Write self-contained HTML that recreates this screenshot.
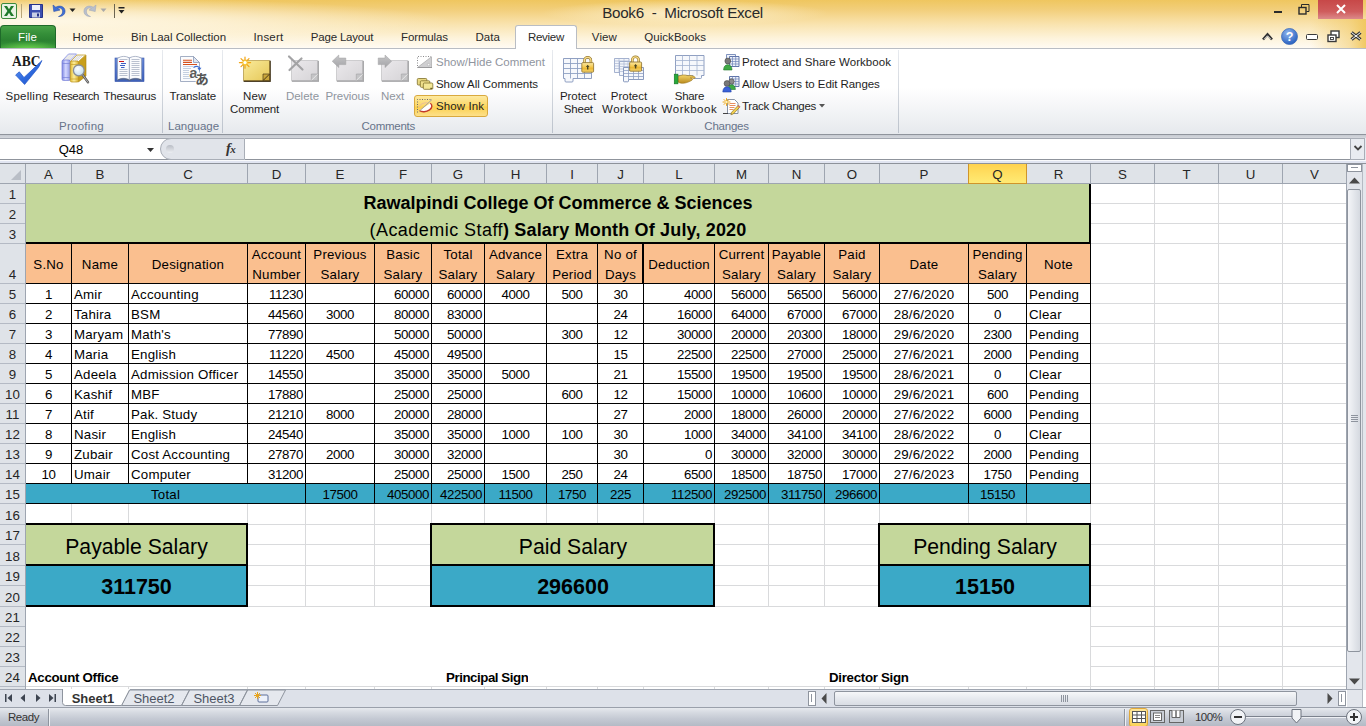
<!DOCTYPE html>
<html><head><meta charset="utf-8"><title>Book6 - Microsoft Excel</title>
<style>
html,body{margin:0;padding:0}
body{width:1366px;height:726px;overflow:hidden;position:relative;background:#fff;font-family:"Liberation Sans","Noto Sans CJK JP",sans-serif;font-size:12px;color:#1e1e1e}
div{position:absolute;box-sizing:border-box;white-space:nowrap}
svg{position:absolute;overflow:visible}
.t{font-size:13.3px;color:#000;overflow:hidden}
.nu{letter-spacing:-.4px}
.tx{letter-spacing:.2px}
.dt{letter-spacing:.15px}
.b{font-weight:bold}
.n{font-weight:normal}
.big{font-size:18px}
.big .n{letter-spacing:.45px}
.s1{font-size:21.2px}
.sg{letter-spacing:-.3px}
.s2{font-size:21.5px}
.h{font-size:13.3px;color:#262626}
.rl,.gl,.tb{font-size:11.5px;height:15px;line-height:15px;color:#1e1e1e}

.dis{color:#8f959e}
.gl{color:#67738a}
.tb{color:#2a2a2a}
.w{color:#fff}
.st{color:#333}
.ttl{font-size:15.2px;height:22px;line-height:22px;color:#2a2a2a}
</style></head><body>
<div style="left:71px;top:184px;width:1px;height:506px;background:#d9dadc"></div>
<div style="left:128px;top:184px;width:1px;height:506px;background:#d9dadc"></div>
<div style="left:247px;top:184px;width:1px;height:506px;background:#d9dadc"></div>
<div style="left:305px;top:184px;width:1px;height:506px;background:#d9dadc"></div>
<div style="left:374px;top:184px;width:1px;height:506px;background:#d9dadc"></div>
<div style="left:431px;top:184px;width:1px;height:506px;background:#d9dadc"></div>
<div style="left:484px;top:184px;width:1px;height:506px;background:#d9dadc"></div>
<div style="left:546px;top:184px;width:1px;height:506px;background:#d9dadc"></div>
<div style="left:597px;top:184px;width:1px;height:506px;background:#d9dadc"></div>
<div style="left:643px;top:184px;width:1px;height:506px;background:#d9dadc"></div>
<div style="left:714px;top:184px;width:1px;height:506px;background:#d9dadc"></div>
<div style="left:768px;top:184px;width:1px;height:506px;background:#d9dadc"></div>
<div style="left:824px;top:184px;width:1px;height:506px;background:#d9dadc"></div>
<div style="left:879px;top:184px;width:1px;height:506px;background:#d9dadc"></div>
<div style="left:968px;top:184px;width:1px;height:506px;background:#d9dadc"></div>
<div style="left:1026px;top:184px;width:1px;height:506px;background:#d9dadc"></div>
<div style="left:1090px;top:184px;width:1px;height:506px;background:#d9dadc"></div>
<div style="left:1154px;top:184px;width:1px;height:506px;background:#d9dadc"></div>
<div style="left:1218px;top:184px;width:1px;height:506px;background:#d9dadc"></div>
<div style="left:1282px;top:184px;width:1px;height:506px;background:#d9dadc"></div>
<div style="left:1346px;top:184px;width:1px;height:506px;background:#d9dadc"></div>
<div style="left:26px;top:203px;width:1321px;height:1px;background:#d9dadc"></div>
<div style="left:26px;top:223px;width:1321px;height:1px;background:#d9dadc"></div>
<div style="left:26px;top:243px;width:1321px;height:1px;background:#d9dadc"></div>
<div style="left:26px;top:283px;width:1321px;height:1px;background:#d9dadc"></div>
<div style="left:26px;top:303px;width:1321px;height:1px;background:#d9dadc"></div>
<div style="left:26px;top:323px;width:1321px;height:1px;background:#d9dadc"></div>
<div style="left:26px;top:343px;width:1321px;height:1px;background:#d9dadc"></div>
<div style="left:26px;top:363px;width:1321px;height:1px;background:#d9dadc"></div>
<div style="left:26px;top:383px;width:1321px;height:1px;background:#d9dadc"></div>
<div style="left:26px;top:403px;width:1321px;height:1px;background:#d9dadc"></div>
<div style="left:26px;top:423px;width:1321px;height:1px;background:#d9dadc"></div>
<div style="left:26px;top:443px;width:1321px;height:1px;background:#d9dadc"></div>
<div style="left:26px;top:463px;width:1321px;height:1px;background:#d9dadc"></div>
<div style="left:26px;top:483px;width:1321px;height:1px;background:#d9dadc"></div>
<div style="left:26px;top:503px;width:1321px;height:1px;background:#d9dadc"></div>
<div style="left:26px;top:524px;width:1321px;height:1px;background:#d9dadc"></div>
<div style="left:26px;top:544px;width:1321px;height:1px;background:#d9dadc"></div>
<div style="left:26px;top:565px;width:1321px;height:1px;background:#d9dadc"></div>
<div style="left:26px;top:585px;width:1321px;height:1px;background:#d9dadc"></div>
<div style="left:26px;top:606px;width:1321px;height:1px;background:#d9dadc"></div>
<div style="left:26px;top:626px;width:1321px;height:1px;background:#d9dadc"></div>
<div style="left:26px;top:646px;width:1321px;height:1px;background:#d9dadc"></div>
<div style="left:26px;top:666px;width:1321px;height:1px;background:#d9dadc"></div>
<div style="left:26px;top:686px;width:1321px;height:1px;background:#d9dadc"></div>
<div style="left:26px;top:607px;width:1064px;height:79px;background:#fff"></div>
<div style="left:26px;top:184px;width:1065px;height:60px;background:#c4d79b"></div>
<div style="left:26px;top:244px;width:1065px;height:40px;background:#fabf8f"></div>
<div style="left:26px;top:284px;width:1065px;height:200px;background:#fff"></div>
<div style="left:26px;top:484px;width:1065px;height:20px;background:#3ba9c7"></div>
<div style="left:26px;top:525px;width:222px;height:41px;background:#c4d79b"></div>
<div style="left:26px;top:566px;width:222px;height:41px;background:#3ba9c7"></div>
<div style="left:432px;top:525px;width:283px;height:41px;background:#c4d79b"></div>
<div style="left:432px;top:566px;width:283px;height:41px;background:#3ba9c7"></div>
<div style="left:880px;top:525px;width:211px;height:41px;background:#c4d79b"></div>
<div style="left:880px;top:566px;width:211px;height:41px;background:#3ba9c7"></div>
<div style="left:25px;top:283px;width:1066px;height:1px;background:#000"></div>
<div style="left:25px;top:303px;width:1066px;height:1px;background:#000"></div>
<div style="left:25px;top:323px;width:1066px;height:1px;background:#000"></div>
<div style="left:25px;top:343px;width:1066px;height:1px;background:#000"></div>
<div style="left:25px;top:363px;width:1066px;height:1px;background:#000"></div>
<div style="left:25px;top:383px;width:1066px;height:1px;background:#000"></div>
<div style="left:25px;top:403px;width:1066px;height:1px;background:#000"></div>
<div style="left:25px;top:423px;width:1066px;height:1px;background:#000"></div>
<div style="left:25px;top:443px;width:1066px;height:1px;background:#000"></div>
<div style="left:25px;top:463px;width:1066px;height:1px;background:#000"></div>
<div style="left:25px;top:483px;width:1066px;height:1px;background:#000"></div>
<div style="left:25px;top:503px;width:1066px;height:1px;background:#000"></div>
<div style="left:25px;top:242px;width:1066px;height:2px;background:#000"></div>
<div style="left:1089px;top:184px;width:2px;height:60px;background:#000"></div>
<div style="left:71px;top:244px;width:1px;height:240px;background:#000"></div>
<div style="left:128px;top:244px;width:1px;height:240px;background:#000"></div>
<div style="left:247px;top:244px;width:1px;height:240px;background:#000"></div>
<div style="left:305px;top:244px;width:1px;height:240px;background:#000"></div>
<div style="left:374px;top:244px;width:1px;height:240px;background:#000"></div>
<div style="left:431px;top:244px;width:1px;height:240px;background:#000"></div>
<div style="left:484px;top:244px;width:1px;height:240px;background:#000"></div>
<div style="left:546px;top:244px;width:1px;height:240px;background:#000"></div>
<div style="left:597px;top:244px;width:1px;height:240px;background:#000"></div>
<div style="left:643px;top:244px;width:1px;height:240px;background:#000"></div>
<div style="left:714px;top:244px;width:1px;height:240px;background:#000"></div>
<div style="left:768px;top:244px;width:1px;height:240px;background:#000"></div>
<div style="left:824px;top:244px;width:1px;height:240px;background:#000"></div>
<div style="left:879px;top:244px;width:1px;height:240px;background:#000"></div>
<div style="left:968px;top:244px;width:1px;height:240px;background:#000"></div>
<div style="left:1026px;top:244px;width:1px;height:240px;background:#000"></div>
<div style="left:1090px;top:244px;width:1px;height:240px;background:#000"></div>
<div style="left:642px;top:244px;width:2px;height:40px;background:#000"></div>
<div style="left:305px;top:484px;width:1px;height:20px;background:#000"></div>
<div style="left:374px;top:484px;width:1px;height:20px;background:#000"></div>
<div style="left:431px;top:484px;width:1px;height:20px;background:#000"></div>
<div style="left:484px;top:484px;width:1px;height:20px;background:#000"></div>
<div style="left:546px;top:484px;width:1px;height:20px;background:#000"></div>
<div style="left:597px;top:484px;width:1px;height:20px;background:#000"></div>
<div style="left:643px;top:484px;width:1px;height:20px;background:#000"></div>
<div style="left:714px;top:484px;width:1px;height:20px;background:#000"></div>
<div style="left:768px;top:484px;width:1px;height:20px;background:#000"></div>
<div style="left:824px;top:484px;width:1px;height:20px;background:#000"></div>
<div style="left:879px;top:484px;width:1px;height:20px;background:#000"></div>
<div style="left:968px;top:484px;width:1px;height:20px;background:#000"></div>
<div style="left:1026px;top:484px;width:1px;height:20px;background:#000"></div>
<div style="left:1090px;top:484px;width:1px;height:20px;background:#000"></div>
<div style="left:25px;top:523px;width:223px;height:2px;background:#000"></div>
<div style="left:25px;top:564px;width:223px;height:2px;background:#000"></div>
<div style="left:25px;top:605px;width:223px;height:2px;background:#000"></div>
<div style="left:246px;top:523px;width:2px;height:84px;background:#000"></div>
<div style="left:431px;top:523px;width:284px;height:2px;background:#000"></div>
<div style="left:431px;top:564px;width:284px;height:2px;background:#000"></div>
<div style="left:431px;top:605px;width:284px;height:2px;background:#000"></div>
<div style="left:713px;top:523px;width:2px;height:84px;background:#000"></div>
<div style="left:430px;top:523px;width:2px;height:84px;background:#000"></div>
<div style="left:879px;top:523px;width:212px;height:2px;background:#000"></div>
<div style="left:879px;top:564px;width:212px;height:2px;background:#000"></div>
<div style="left:879px;top:605px;width:212px;height:2px;background:#000"></div>
<div style="left:1089px;top:523px;width:2px;height:84px;background:#000"></div>
<div style="left:878px;top:523px;width:2px;height:84px;background:#000"></div>
<div class="t big b" style="left:26px;top:184px;width:1064px;height:39px;line-height:41px;text-align:center;top:192px;height:22px;line-height:22px">Rawalpindi College Of Commerce &amp; Sciences</div>
<div class="t big b" style="left:26px;top:204px;width:1064px;height:39px;line-height:41px;text-align:center;top:219px;height:23px;line-height:23px;letter-spacing:.17px"><span class="n">(Academic Staff</span>) Salary Month Of July, 2020</div>
<div class="t tx" style="left:26px;top:244px;width:45px;height:39px;line-height:41px;text-align:center;">S.No</div>
<div class="t tx" style="left:72px;top:244px;width:56px;height:39px;line-height:41px;text-align:center;">Name</div>
<div class="t tx" style="left:129px;top:244px;width:118px;height:39px;line-height:41px;text-align:center;">Designation</div>
<div class="t tx" style="left:248px;top:244px;width:57px;height:20px;line-height:22px;text-align:center">Account</div>
<div class="t tx" style="left:248px;top:264px;width:57px;height:20px;line-height:22px;text-align:center">Number</div>
<div class="t tx" style="left:306px;top:244px;width:68px;height:20px;line-height:22px;text-align:center">Previous</div>
<div class="t tx" style="left:306px;top:264px;width:68px;height:20px;line-height:22px;text-align:center">Salary</div>
<div class="t tx" style="left:375px;top:244px;width:56px;height:20px;line-height:22px;text-align:center">Basic</div>
<div class="t tx" style="left:375px;top:264px;width:56px;height:20px;line-height:22px;text-align:center">Salary</div>
<div class="t tx" style="left:432px;top:244px;width:52px;height:20px;line-height:22px;text-align:center">Total</div>
<div class="t tx" style="left:432px;top:264px;width:52px;height:20px;line-height:22px;text-align:center">Salary</div>
<div class="t tx" style="left:485px;top:244px;width:61px;height:20px;line-height:22px;text-align:center">Advance</div>
<div class="t tx" style="left:485px;top:264px;width:61px;height:20px;line-height:22px;text-align:center">Salary</div>
<div class="t tx" style="left:547px;top:244px;width:50px;height:20px;line-height:22px;text-align:center">Extra</div>
<div class="t tx" style="left:547px;top:264px;width:50px;height:20px;line-height:22px;text-align:center">Period</div>
<div class="t tx" style="left:598px;top:244px;width:45px;height:20px;line-height:22px;text-align:center">No of</div>
<div class="t tx" style="left:598px;top:264px;width:45px;height:20px;line-height:22px;text-align:center">Days</div>
<div class="t tx" style="left:644px;top:244px;width:70px;height:39px;line-height:41px;text-align:center;">Deduction</div>
<div class="t tx" style="left:715px;top:244px;width:53px;height:20px;line-height:22px;text-align:center">Current</div>
<div class="t tx" style="left:715px;top:264px;width:53px;height:20px;line-height:22px;text-align:center">Salary</div>
<div class="t tx" style="left:769px;top:244px;width:55px;height:20px;line-height:22px;text-align:center">Payable</div>
<div class="t tx" style="left:769px;top:264px;width:55px;height:20px;line-height:22px;text-align:center">Salary</div>
<div class="t tx" style="left:825px;top:244px;width:54px;height:20px;line-height:22px;text-align:center">Paid</div>
<div class="t tx" style="left:825px;top:264px;width:54px;height:20px;line-height:22px;text-align:center">Salary</div>
<div class="t tx" style="left:880px;top:244px;width:88px;height:39px;line-height:41px;text-align:center;">Date</div>
<div class="t tx" style="left:969px;top:244px;width:57px;height:20px;line-height:22px;text-align:center">Pending</div>
<div class="t tx" style="left:969px;top:264px;width:57px;height:20px;line-height:22px;text-align:center">Salary</div>
<div class="t tx" style="left:1027px;top:244px;width:63px;height:39px;line-height:41px;text-align:center;">Note</div>
<div class="t nu" style="left:26px;top:284px;width:45px;height:19px;line-height:21px;text-align:center;">1</div>
<div class="t tx" style="left:72px;top:284px;width:56px;height:19px;line-height:21px;text-align:left;padding:0 2px;">Amir</div>
<div class="t tx" style="left:129px;top:284px;width:118px;height:19px;line-height:21px;text-align:left;padding:0 2px;">Accounting</div>
<div class="t nu" style="left:248px;top:284px;width:57px;height:19px;line-height:21px;text-align:right;padding:0 2px;">11230</div>
<div class="t nu" style="left:375px;top:284px;width:56px;height:19px;line-height:21px;text-align:right;padding:0 2px;">60000</div>
<div class="t nu" style="left:432px;top:284px;width:52px;height:19px;line-height:21px;text-align:right;padding:0 2px;">60000</div>
<div class="t nu" style="left:485px;top:284px;width:61px;height:19px;line-height:21px;text-align:center;">4000</div>
<div class="t nu" style="left:547px;top:284px;width:50px;height:19px;line-height:21px;text-align:center;">500</div>
<div class="t nu" style="left:598px;top:284px;width:45px;height:19px;line-height:21px;text-align:center;">30</div>
<div class="t nu" style="left:644px;top:284px;width:70px;height:19px;line-height:21px;text-align:right;padding:0 2px;">4000</div>
<div class="t nu" style="left:715px;top:284px;width:53px;height:19px;line-height:21px;text-align:right;padding:0 2px;">56000</div>
<div class="t nu" style="left:769px;top:284px;width:55px;height:19px;line-height:21px;text-align:right;padding:0 2px;">56500</div>
<div class="t nu" style="left:825px;top:284px;width:54px;height:19px;line-height:21px;text-align:right;padding:0 2px;">56000</div>
<div class="t dt" style="left:880px;top:284px;width:88px;height:19px;line-height:21px;text-align:center;">27/6/2020</div>
<div class="t nu" style="left:969px;top:284px;width:57px;height:19px;line-height:21px;text-align:center;">500</div>
<div class="t tx" style="left:1027px;top:284px;width:63px;height:19px;line-height:21px;text-align:left;padding:0 2px;">Pending</div>
<div class="t nu" style="left:26px;top:304px;width:45px;height:19px;line-height:21px;text-align:center;">2</div>
<div class="t tx" style="left:72px;top:304px;width:56px;height:19px;line-height:21px;text-align:left;padding:0 2px;">Tahira</div>
<div class="t tx" style="left:129px;top:304px;width:118px;height:19px;line-height:21px;text-align:left;padding:0 2px;">BSM</div>
<div class="t nu" style="left:248px;top:304px;width:57px;height:19px;line-height:21px;text-align:right;padding:0 2px;">44560</div>
<div class="t nu" style="left:306px;top:304px;width:68px;height:19px;line-height:21px;text-align:center;">3000</div>
<div class="t nu" style="left:375px;top:304px;width:56px;height:19px;line-height:21px;text-align:right;padding:0 2px;">80000</div>
<div class="t nu" style="left:432px;top:304px;width:52px;height:19px;line-height:21px;text-align:right;padding:0 2px;">83000</div>
<div class="t nu" style="left:598px;top:304px;width:45px;height:19px;line-height:21px;text-align:center;">24</div>
<div class="t nu" style="left:644px;top:304px;width:70px;height:19px;line-height:21px;text-align:right;padding:0 2px;">16000</div>
<div class="t nu" style="left:715px;top:304px;width:53px;height:19px;line-height:21px;text-align:right;padding:0 2px;">64000</div>
<div class="t nu" style="left:769px;top:304px;width:55px;height:19px;line-height:21px;text-align:right;padding:0 2px;">67000</div>
<div class="t nu" style="left:825px;top:304px;width:54px;height:19px;line-height:21px;text-align:right;padding:0 2px;">67000</div>
<div class="t dt" style="left:880px;top:304px;width:88px;height:19px;line-height:21px;text-align:center;">28/6/2020</div>
<div class="t nu" style="left:969px;top:304px;width:57px;height:19px;line-height:21px;text-align:center;">0</div>
<div class="t tx" style="left:1027px;top:304px;width:63px;height:19px;line-height:21px;text-align:left;padding:0 2px;">Clear</div>
<div class="t nu" style="left:26px;top:324px;width:45px;height:19px;line-height:21px;text-align:center;">3</div>
<div class="t tx" style="left:72px;top:324px;width:56px;height:19px;line-height:21px;text-align:left;padding:0 2px;">Maryam</div>
<div class="t tx" style="left:129px;top:324px;width:118px;height:19px;line-height:21px;text-align:left;padding:0 2px;">Math's</div>
<div class="t nu" style="left:248px;top:324px;width:57px;height:19px;line-height:21px;text-align:right;padding:0 2px;">77890</div>
<div class="t nu" style="left:375px;top:324px;width:56px;height:19px;line-height:21px;text-align:right;padding:0 2px;">50000</div>
<div class="t nu" style="left:432px;top:324px;width:52px;height:19px;line-height:21px;text-align:right;padding:0 2px;">50000</div>
<div class="t nu" style="left:547px;top:324px;width:50px;height:19px;line-height:21px;text-align:center;">300</div>
<div class="t nu" style="left:598px;top:324px;width:45px;height:19px;line-height:21px;text-align:center;">12</div>
<div class="t nu" style="left:644px;top:324px;width:70px;height:19px;line-height:21px;text-align:right;padding:0 2px;">30000</div>
<div class="t nu" style="left:715px;top:324px;width:53px;height:19px;line-height:21px;text-align:right;padding:0 2px;">20000</div>
<div class="t nu" style="left:769px;top:324px;width:55px;height:19px;line-height:21px;text-align:right;padding:0 2px;">20300</div>
<div class="t nu" style="left:825px;top:324px;width:54px;height:19px;line-height:21px;text-align:right;padding:0 2px;">18000</div>
<div class="t dt" style="left:880px;top:324px;width:88px;height:19px;line-height:21px;text-align:center;">29/6/2020</div>
<div class="t nu" style="left:969px;top:324px;width:57px;height:19px;line-height:21px;text-align:center;">2300</div>
<div class="t tx" style="left:1027px;top:324px;width:63px;height:19px;line-height:21px;text-align:left;padding:0 2px;">Pending</div>
<div class="t nu" style="left:26px;top:344px;width:45px;height:19px;line-height:21px;text-align:center;">4</div>
<div class="t tx" style="left:72px;top:344px;width:56px;height:19px;line-height:21px;text-align:left;padding:0 2px;">Maria</div>
<div class="t tx" style="left:129px;top:344px;width:118px;height:19px;line-height:21px;text-align:left;padding:0 2px;">English</div>
<div class="t nu" style="left:248px;top:344px;width:57px;height:19px;line-height:21px;text-align:right;padding:0 2px;">11220</div>
<div class="t nu" style="left:306px;top:344px;width:68px;height:19px;line-height:21px;text-align:center;">4500</div>
<div class="t nu" style="left:375px;top:344px;width:56px;height:19px;line-height:21px;text-align:right;padding:0 2px;">45000</div>
<div class="t nu" style="left:432px;top:344px;width:52px;height:19px;line-height:21px;text-align:right;padding:0 2px;">49500</div>
<div class="t nu" style="left:598px;top:344px;width:45px;height:19px;line-height:21px;text-align:center;">15</div>
<div class="t nu" style="left:644px;top:344px;width:70px;height:19px;line-height:21px;text-align:right;padding:0 2px;">22500</div>
<div class="t nu" style="left:715px;top:344px;width:53px;height:19px;line-height:21px;text-align:right;padding:0 2px;">22500</div>
<div class="t nu" style="left:769px;top:344px;width:55px;height:19px;line-height:21px;text-align:right;padding:0 2px;">27000</div>
<div class="t nu" style="left:825px;top:344px;width:54px;height:19px;line-height:21px;text-align:right;padding:0 2px;">25000</div>
<div class="t dt" style="left:880px;top:344px;width:88px;height:19px;line-height:21px;text-align:center;">27/6/2021</div>
<div class="t nu" style="left:969px;top:344px;width:57px;height:19px;line-height:21px;text-align:center;">2000</div>
<div class="t tx" style="left:1027px;top:344px;width:63px;height:19px;line-height:21px;text-align:left;padding:0 2px;">Pending</div>
<div class="t nu" style="left:26px;top:364px;width:45px;height:19px;line-height:21px;text-align:center;">5</div>
<div class="t tx" style="left:72px;top:364px;width:56px;height:19px;line-height:21px;text-align:left;padding:0 2px;">Adeela</div>
<div class="t tx" style="left:129px;top:364px;width:118px;height:19px;line-height:21px;text-align:left;padding:0 2px;">Admission Officer</div>
<div class="t nu" style="left:248px;top:364px;width:57px;height:19px;line-height:21px;text-align:right;padding:0 2px;">14550</div>
<div class="t nu" style="left:375px;top:364px;width:56px;height:19px;line-height:21px;text-align:right;padding:0 2px;">35000</div>
<div class="t nu" style="left:432px;top:364px;width:52px;height:19px;line-height:21px;text-align:right;padding:0 2px;">35000</div>
<div class="t nu" style="left:485px;top:364px;width:61px;height:19px;line-height:21px;text-align:center;">5000</div>
<div class="t nu" style="left:598px;top:364px;width:45px;height:19px;line-height:21px;text-align:center;">21</div>
<div class="t nu" style="left:644px;top:364px;width:70px;height:19px;line-height:21px;text-align:right;padding:0 2px;">15500</div>
<div class="t nu" style="left:715px;top:364px;width:53px;height:19px;line-height:21px;text-align:right;padding:0 2px;">19500</div>
<div class="t nu" style="left:769px;top:364px;width:55px;height:19px;line-height:21px;text-align:right;padding:0 2px;">19500</div>
<div class="t nu" style="left:825px;top:364px;width:54px;height:19px;line-height:21px;text-align:right;padding:0 2px;">19500</div>
<div class="t dt" style="left:880px;top:364px;width:88px;height:19px;line-height:21px;text-align:center;">28/6/2021</div>
<div class="t nu" style="left:969px;top:364px;width:57px;height:19px;line-height:21px;text-align:center;">0</div>
<div class="t tx" style="left:1027px;top:364px;width:63px;height:19px;line-height:21px;text-align:left;padding:0 2px;">Clear</div>
<div class="t nu" style="left:26px;top:384px;width:45px;height:19px;line-height:21px;text-align:center;">6</div>
<div class="t tx" style="left:72px;top:384px;width:56px;height:19px;line-height:21px;text-align:left;padding:0 2px;">Kashif</div>
<div class="t tx" style="left:129px;top:384px;width:118px;height:19px;line-height:21px;text-align:left;padding:0 2px;">MBF</div>
<div class="t nu" style="left:248px;top:384px;width:57px;height:19px;line-height:21px;text-align:right;padding:0 2px;">17880</div>
<div class="t nu" style="left:375px;top:384px;width:56px;height:19px;line-height:21px;text-align:right;padding:0 2px;">25000</div>
<div class="t nu" style="left:432px;top:384px;width:52px;height:19px;line-height:21px;text-align:right;padding:0 2px;">25000</div>
<div class="t nu" style="left:547px;top:384px;width:50px;height:19px;line-height:21px;text-align:center;">600</div>
<div class="t nu" style="left:598px;top:384px;width:45px;height:19px;line-height:21px;text-align:center;">12</div>
<div class="t nu" style="left:644px;top:384px;width:70px;height:19px;line-height:21px;text-align:right;padding:0 2px;">15000</div>
<div class="t nu" style="left:715px;top:384px;width:53px;height:19px;line-height:21px;text-align:right;padding:0 2px;">10000</div>
<div class="t nu" style="left:769px;top:384px;width:55px;height:19px;line-height:21px;text-align:right;padding:0 2px;">10600</div>
<div class="t nu" style="left:825px;top:384px;width:54px;height:19px;line-height:21px;text-align:right;padding:0 2px;">10000</div>
<div class="t dt" style="left:880px;top:384px;width:88px;height:19px;line-height:21px;text-align:center;">29/6/2021</div>
<div class="t nu" style="left:969px;top:384px;width:57px;height:19px;line-height:21px;text-align:center;">600</div>
<div class="t tx" style="left:1027px;top:384px;width:63px;height:19px;line-height:21px;text-align:left;padding:0 2px;">Pending</div>
<div class="t nu" style="left:26px;top:404px;width:45px;height:19px;line-height:21px;text-align:center;">7</div>
<div class="t tx" style="left:72px;top:404px;width:56px;height:19px;line-height:21px;text-align:left;padding:0 2px;">Atif</div>
<div class="t tx" style="left:129px;top:404px;width:118px;height:19px;line-height:21px;text-align:left;padding:0 2px;">Pak. Study</div>
<div class="t nu" style="left:248px;top:404px;width:57px;height:19px;line-height:21px;text-align:right;padding:0 2px;">21210</div>
<div class="t nu" style="left:306px;top:404px;width:68px;height:19px;line-height:21px;text-align:center;">8000</div>
<div class="t nu" style="left:375px;top:404px;width:56px;height:19px;line-height:21px;text-align:right;padding:0 2px;">20000</div>
<div class="t nu" style="left:432px;top:404px;width:52px;height:19px;line-height:21px;text-align:right;padding:0 2px;">28000</div>
<div class="t nu" style="left:598px;top:404px;width:45px;height:19px;line-height:21px;text-align:center;">27</div>
<div class="t nu" style="left:644px;top:404px;width:70px;height:19px;line-height:21px;text-align:right;padding:0 2px;">2000</div>
<div class="t nu" style="left:715px;top:404px;width:53px;height:19px;line-height:21px;text-align:right;padding:0 2px;">18000</div>
<div class="t nu" style="left:769px;top:404px;width:55px;height:19px;line-height:21px;text-align:right;padding:0 2px;">26000</div>
<div class="t nu" style="left:825px;top:404px;width:54px;height:19px;line-height:21px;text-align:right;padding:0 2px;">20000</div>
<div class="t dt" style="left:880px;top:404px;width:88px;height:19px;line-height:21px;text-align:center;">27/6/2022</div>
<div class="t nu" style="left:969px;top:404px;width:57px;height:19px;line-height:21px;text-align:center;">6000</div>
<div class="t tx" style="left:1027px;top:404px;width:63px;height:19px;line-height:21px;text-align:left;padding:0 2px;">Pending</div>
<div class="t nu" style="left:26px;top:424px;width:45px;height:19px;line-height:21px;text-align:center;">8</div>
<div class="t tx" style="left:72px;top:424px;width:56px;height:19px;line-height:21px;text-align:left;padding:0 2px;">Nasir</div>
<div class="t tx" style="left:129px;top:424px;width:118px;height:19px;line-height:21px;text-align:left;padding:0 2px;">English</div>
<div class="t nu" style="left:248px;top:424px;width:57px;height:19px;line-height:21px;text-align:right;padding:0 2px;">24540</div>
<div class="t nu" style="left:375px;top:424px;width:56px;height:19px;line-height:21px;text-align:right;padding:0 2px;">35000</div>
<div class="t nu" style="left:432px;top:424px;width:52px;height:19px;line-height:21px;text-align:right;padding:0 2px;">35000</div>
<div class="t nu" style="left:485px;top:424px;width:61px;height:19px;line-height:21px;text-align:center;">1000</div>
<div class="t nu" style="left:547px;top:424px;width:50px;height:19px;line-height:21px;text-align:center;">100</div>
<div class="t nu" style="left:598px;top:424px;width:45px;height:19px;line-height:21px;text-align:center;">30</div>
<div class="t nu" style="left:644px;top:424px;width:70px;height:19px;line-height:21px;text-align:right;padding:0 2px;">1000</div>
<div class="t nu" style="left:715px;top:424px;width:53px;height:19px;line-height:21px;text-align:right;padding:0 2px;">34000</div>
<div class="t nu" style="left:769px;top:424px;width:55px;height:19px;line-height:21px;text-align:right;padding:0 2px;">34100</div>
<div class="t nu" style="left:825px;top:424px;width:54px;height:19px;line-height:21px;text-align:right;padding:0 2px;">34100</div>
<div class="t dt" style="left:880px;top:424px;width:88px;height:19px;line-height:21px;text-align:center;">28/6/2022</div>
<div class="t nu" style="left:969px;top:424px;width:57px;height:19px;line-height:21px;text-align:center;">0</div>
<div class="t tx" style="left:1027px;top:424px;width:63px;height:19px;line-height:21px;text-align:left;padding:0 2px;">Clear</div>
<div class="t nu" style="left:26px;top:444px;width:45px;height:19px;line-height:21px;text-align:center;">9</div>
<div class="t tx" style="left:72px;top:444px;width:56px;height:19px;line-height:21px;text-align:left;padding:0 2px;">Zubair</div>
<div class="t tx" style="left:129px;top:444px;width:118px;height:19px;line-height:21px;text-align:left;padding:0 2px;">Cost Accounting</div>
<div class="t nu" style="left:248px;top:444px;width:57px;height:19px;line-height:21px;text-align:right;padding:0 2px;">27870</div>
<div class="t nu" style="left:306px;top:444px;width:68px;height:19px;line-height:21px;text-align:center;">2000</div>
<div class="t nu" style="left:375px;top:444px;width:56px;height:19px;line-height:21px;text-align:right;padding:0 2px;">30000</div>
<div class="t nu" style="left:432px;top:444px;width:52px;height:19px;line-height:21px;text-align:right;padding:0 2px;">32000</div>
<div class="t nu" style="left:598px;top:444px;width:45px;height:19px;line-height:21px;text-align:center;">30</div>
<div class="t nu" style="left:644px;top:444px;width:70px;height:19px;line-height:21px;text-align:right;padding:0 2px;">0</div>
<div class="t nu" style="left:715px;top:444px;width:53px;height:19px;line-height:21px;text-align:right;padding:0 2px;">30000</div>
<div class="t nu" style="left:769px;top:444px;width:55px;height:19px;line-height:21px;text-align:right;padding:0 2px;">32000</div>
<div class="t nu" style="left:825px;top:444px;width:54px;height:19px;line-height:21px;text-align:right;padding:0 2px;">30000</div>
<div class="t dt" style="left:880px;top:444px;width:88px;height:19px;line-height:21px;text-align:center;">29/6/2022</div>
<div class="t nu" style="left:969px;top:444px;width:57px;height:19px;line-height:21px;text-align:center;">2000</div>
<div class="t tx" style="left:1027px;top:444px;width:63px;height:19px;line-height:21px;text-align:left;padding:0 2px;">Pending</div>
<div class="t nu" style="left:26px;top:464px;width:45px;height:19px;line-height:21px;text-align:center;">10</div>
<div class="t tx" style="left:72px;top:464px;width:56px;height:19px;line-height:21px;text-align:left;padding:0 2px;">Umair</div>
<div class="t tx" style="left:129px;top:464px;width:118px;height:19px;line-height:21px;text-align:left;padding:0 2px;">Computer</div>
<div class="t nu" style="left:248px;top:464px;width:57px;height:19px;line-height:21px;text-align:right;padding:0 2px;">31200</div>
<div class="t nu" style="left:375px;top:464px;width:56px;height:19px;line-height:21px;text-align:right;padding:0 2px;">25000</div>
<div class="t nu" style="left:432px;top:464px;width:52px;height:19px;line-height:21px;text-align:right;padding:0 2px;">25000</div>
<div class="t nu" style="left:485px;top:464px;width:61px;height:19px;line-height:21px;text-align:center;">1500</div>
<div class="t nu" style="left:547px;top:464px;width:50px;height:19px;line-height:21px;text-align:center;">250</div>
<div class="t nu" style="left:598px;top:464px;width:45px;height:19px;line-height:21px;text-align:center;">24</div>
<div class="t nu" style="left:644px;top:464px;width:70px;height:19px;line-height:21px;text-align:right;padding:0 2px;">6500</div>
<div class="t nu" style="left:715px;top:464px;width:53px;height:19px;line-height:21px;text-align:right;padding:0 2px;">18500</div>
<div class="t nu" style="left:769px;top:464px;width:55px;height:19px;line-height:21px;text-align:right;padding:0 2px;">18750</div>
<div class="t nu" style="left:825px;top:464px;width:54px;height:19px;line-height:21px;text-align:right;padding:0 2px;">17000</div>
<div class="t dt" style="left:880px;top:464px;width:88px;height:19px;line-height:21px;text-align:center;">27/6/2023</div>
<div class="t nu" style="left:969px;top:464px;width:57px;height:19px;line-height:21px;text-align:center;">1750</div>
<div class="t tx" style="left:1027px;top:464px;width:63px;height:19px;line-height:21px;text-align:left;padding:0 2px;">Pending</div>
<div class="t tx" style="left:26px;top:484px;width:279px;height:19px;line-height:21px;text-align:center;">Total</div>
<div class="t nu" style="left:306px;top:484px;width:68px;height:19px;line-height:21px;text-align:center;">17500</div>
<div class="t nu" style="left:375px;top:484px;width:56px;height:19px;line-height:21px;text-align:right;padding:0 2px;">405000</div>
<div class="t nu" style="left:432px;top:484px;width:52px;height:19px;line-height:21px;text-align:right;padding:0 2px;">422500</div>
<div class="t nu" style="left:485px;top:484px;width:61px;height:19px;line-height:21px;text-align:center;">11500</div>
<div class="t nu" style="left:547px;top:484px;width:50px;height:19px;line-height:21px;text-align:center;">1750</div>
<div class="t nu" style="left:598px;top:484px;width:45px;height:19px;line-height:21px;text-align:center;">225</div>
<div class="t nu" style="left:644px;top:484px;width:70px;height:19px;line-height:21px;text-align:right;padding:0 2px;">112500</div>
<div class="t nu" style="left:715px;top:484px;width:53px;height:19px;line-height:21px;text-align:right;padding:0 2px;">292500</div>
<div class="t nu" style="left:769px;top:484px;width:55px;height:19px;line-height:21px;text-align:right;padding:0 2px;">311750</div>
<div class="t nu" style="left:825px;top:484px;width:54px;height:19px;line-height:21px;text-align:right;padding:0 2px;">296600</div>
<div class="t nu" style="left:969px;top:484px;width:57px;height:19px;line-height:21px;text-align:center;">15150</div>
<div class="t s1" style="left:26px;top:525px;width:221px;height:40px;line-height:42px;text-align:center;padding-top:1px">Payable Salary</div>
<div class="t s2 b" style="left:26px;top:566px;width:221px;height:40px;line-height:42px;text-align:center;">311750</div>
<div class="t s1" style="left:432px;top:525px;width:282px;height:40px;line-height:42px;text-align:center;padding-top:1px">Paid Salary</div>
<div class="t s2 b" style="left:432px;top:566px;width:282px;height:40px;line-height:42px;text-align:center;">296600</div>
<div class="t s1" style="left:880px;top:525px;width:210px;height:40px;line-height:42px;text-align:center;padding-top:1px">Pending Salary</div>
<div class="t s2 b" style="left:880px;top:566px;width:210px;height:40px;line-height:42px;text-align:center;">15150</div>
<div class="t b sg" style="left:26px;top:667px;width:221px;height:19px;line-height:21px;text-align:left;padding:0 2px;">Account Office</div>
<div class="t b sg" style="letter-spacing:-.45px;left:446px;top:667px;height:20px;line-height:22px">Principal Sign</div>
<div class="t b sg" style="left:829px;top:667px;height:20px;line-height:22px">Director Sign</div>
<div style="left:0px;top:164px;width:1347px;height:19px;background:#dfe3e8"></div>
<div style="left:0px;top:183px;width:25px;height:507px;background:#dfe3e8"></div>
<div style="left:0px;top:163px;width:1366px;height:1px;background:#8d929a"></div>
<div style="left:0px;top:183px;width:1347px;height:1px;background:#9ea5b0"></div>
<div style="left:25px;top:164px;width:1px;height:526px;background:#9ea5b0"></div>
<div style="left:71px;top:164px;width:1px;height:19px;background:#9ea5b0"></div>
<div style="left:128px;top:164px;width:1px;height:19px;background:#9ea5b0"></div>
<div style="left:247px;top:164px;width:1px;height:19px;background:#9ea5b0"></div>
<div style="left:305px;top:164px;width:1px;height:19px;background:#9ea5b0"></div>
<div style="left:374px;top:164px;width:1px;height:19px;background:#9ea5b0"></div>
<div style="left:431px;top:164px;width:1px;height:19px;background:#9ea5b0"></div>
<div style="left:484px;top:164px;width:1px;height:19px;background:#9ea5b0"></div>
<div style="left:546px;top:164px;width:1px;height:19px;background:#9ea5b0"></div>
<div style="left:597px;top:164px;width:1px;height:19px;background:#9ea5b0"></div>
<div style="left:643px;top:164px;width:1px;height:19px;background:#9ea5b0"></div>
<div style="left:714px;top:164px;width:1px;height:19px;background:#9ea5b0"></div>
<div style="left:768px;top:164px;width:1px;height:19px;background:#9ea5b0"></div>
<div style="left:824px;top:164px;width:1px;height:19px;background:#9ea5b0"></div>
<div style="left:879px;top:164px;width:1px;height:19px;background:#9ea5b0"></div>
<div style="left:968px;top:164px;width:1px;height:19px;background:#9ea5b0"></div>
<div style="left:1026px;top:164px;width:1px;height:19px;background:#9ea5b0"></div>
<div style="left:1090px;top:164px;width:1px;height:19px;background:#9ea5b0"></div>
<div style="left:1154px;top:164px;width:1px;height:19px;background:#9ea5b0"></div>
<div style="left:1218px;top:164px;width:1px;height:19px;background:#9ea5b0"></div>
<div style="left:1282px;top:164px;width:1px;height:19px;background:#9ea5b0"></div>
<div style="left:1346px;top:164px;width:1px;height:19px;background:#9ea5b0"></div>
<div style="left:0px;top:203px;width:25px;height:1px;background:#b4bac4"></div>
<div style="left:0px;top:223px;width:25px;height:1px;background:#b4bac4"></div>
<div style="left:0px;top:243px;width:25px;height:1px;background:#b4bac4"></div>
<div style="left:0px;top:283px;width:25px;height:1px;background:#b4bac4"></div>
<div style="left:0px;top:303px;width:25px;height:1px;background:#b4bac4"></div>
<div style="left:0px;top:323px;width:25px;height:1px;background:#b4bac4"></div>
<div style="left:0px;top:343px;width:25px;height:1px;background:#b4bac4"></div>
<div style="left:0px;top:363px;width:25px;height:1px;background:#b4bac4"></div>
<div style="left:0px;top:383px;width:25px;height:1px;background:#b4bac4"></div>
<div style="left:0px;top:403px;width:25px;height:1px;background:#b4bac4"></div>
<div style="left:0px;top:423px;width:25px;height:1px;background:#b4bac4"></div>
<div style="left:0px;top:443px;width:25px;height:1px;background:#b4bac4"></div>
<div style="left:0px;top:463px;width:25px;height:1px;background:#b4bac4"></div>
<div style="left:0px;top:483px;width:25px;height:1px;background:#b4bac4"></div>
<div style="left:0px;top:503px;width:25px;height:1px;background:#b4bac4"></div>
<div style="left:0px;top:524px;width:25px;height:1px;background:#b4bac4"></div>
<div style="left:0px;top:544px;width:25px;height:1px;background:#b4bac4"></div>
<div style="left:0px;top:565px;width:25px;height:1px;background:#b4bac4"></div>
<div style="left:0px;top:585px;width:25px;height:1px;background:#b4bac4"></div>
<div style="left:0px;top:606px;width:25px;height:1px;background:#b4bac4"></div>
<div style="left:0px;top:626px;width:25px;height:1px;background:#b4bac4"></div>
<div style="left:0px;top:646px;width:25px;height:1px;background:#b4bac4"></div>
<div style="left:0px;top:666px;width:25px;height:1px;background:#b4bac4"></div>
<div style="left:0px;top:686px;width:25px;height:1px;background:#b4bac4"></div>
<div style="left:968px;top:164px;width:59px;height:20px;background:linear-gradient(#ffd24f,#ffdf62 50%,#ffea74);border:1px solid #cf952a;border-top:none"></div>
<div class="h" style="left:26px;top:164px;width:45px;height:19px;line-height:21px;text-align:center">A</div>
<div class="h" style="left:72px;top:164px;width:56px;height:19px;line-height:21px;text-align:center">B</div>
<div class="h" style="left:129px;top:164px;width:118px;height:19px;line-height:21px;text-align:center">C</div>
<div class="h" style="left:248px;top:164px;width:57px;height:19px;line-height:21px;text-align:center">D</div>
<div class="h" style="left:306px;top:164px;width:68px;height:19px;line-height:21px;text-align:center">E</div>
<div class="h" style="left:375px;top:164px;width:56px;height:19px;line-height:21px;text-align:center">F</div>
<div class="h" style="left:432px;top:164px;width:52px;height:19px;line-height:21px;text-align:center">G</div>
<div class="h" style="left:485px;top:164px;width:61px;height:19px;line-height:21px;text-align:center">H</div>
<div class="h" style="left:547px;top:164px;width:50px;height:19px;line-height:21px;text-align:center">I</div>
<div class="h" style="left:598px;top:164px;width:45px;height:19px;line-height:21px;text-align:center">J</div>
<div class="h" style="left:644px;top:164px;width:70px;height:19px;line-height:21px;text-align:center">L</div>
<div class="h" style="left:715px;top:164px;width:53px;height:19px;line-height:21px;text-align:center">M</div>
<div class="h" style="left:769px;top:164px;width:55px;height:19px;line-height:21px;text-align:center">N</div>
<div class="h" style="left:825px;top:164px;width:54px;height:19px;line-height:21px;text-align:center">O</div>
<div class="h" style="left:880px;top:164px;width:88px;height:19px;line-height:21px;text-align:center">P</div>
<div class="h" style="left:969px;top:164px;width:57px;height:19px;line-height:21px;text-align:center">Q</div>
<div class="h" style="left:1027px;top:164px;width:63px;height:19px;line-height:21px;text-align:center">R</div>
<div class="h" style="left:1091px;top:164px;width:63px;height:19px;line-height:21px;text-align:center">S</div>
<div class="h" style="left:1155px;top:164px;width:63px;height:19px;line-height:21px;text-align:center">T</div>
<div class="h" style="left:1219px;top:164px;width:63px;height:19px;line-height:21px;text-align:center">U</div>
<div class="h" style="left:1283px;top:164px;width:63px;height:19px;line-height:21px;text-align:center">V</div>
<div class="h" style="left:0;top:184px;width:25px;height:19px;line-height:22px;text-align:center">1</div>
<div class="h" style="left:0;top:204px;width:25px;height:19px;line-height:22px;text-align:center">2</div>
<div class="h" style="left:0;top:224px;width:25px;height:19px;line-height:22px;text-align:center">3</div>
<div class="h" style="left:0;top:264px;width:25px;height:19px;line-height:21px;text-align:center">4</div>
<div class="h" style="left:0;top:284px;width:25px;height:19px;line-height:22px;text-align:center">5</div>
<div class="h" style="left:0;top:304px;width:25px;height:19px;line-height:22px;text-align:center">6</div>
<div class="h" style="left:0;top:324px;width:25px;height:19px;line-height:22px;text-align:center">7</div>
<div class="h" style="left:0;top:344px;width:25px;height:19px;line-height:22px;text-align:center">8</div>
<div class="h" style="left:0;top:364px;width:25px;height:19px;line-height:22px;text-align:center">9</div>
<div class="h" style="left:0;top:384px;width:25px;height:19px;line-height:22px;text-align:center">10</div>
<div class="h" style="left:0;top:404px;width:25px;height:19px;line-height:22px;text-align:center">11</div>
<div class="h" style="left:0;top:424px;width:25px;height:19px;line-height:22px;text-align:center">12</div>
<div class="h" style="left:0;top:444px;width:25px;height:19px;line-height:22px;text-align:center">13</div>
<div class="h" style="left:0;top:464px;width:25px;height:19px;line-height:22px;text-align:center">14</div>
<div class="h" style="left:0;top:484px;width:25px;height:19px;line-height:22px;text-align:center">15</div>
<div class="h" style="left:0;top:504px;width:25px;height:20px;line-height:23px;text-align:center">16</div>
<div class="h" style="left:0;top:525px;width:25px;height:19px;line-height:22px;text-align:center">17</div>
<div class="h" style="left:0;top:545px;width:25px;height:20px;line-height:23px;text-align:center">18</div>
<div class="h" style="left:0;top:566px;width:25px;height:19px;line-height:22px;text-align:center">19</div>
<div class="h" style="left:0;top:586px;width:25px;height:20px;line-height:23px;text-align:center">20</div>
<div class="h" style="left:0;top:607px;width:25px;height:19px;line-height:22px;text-align:center">21</div>
<div class="h" style="left:0;top:627px;width:25px;height:19px;line-height:22px;text-align:center">22</div>
<div class="h" style="left:0;top:647px;width:25px;height:19px;line-height:22px;text-align:center">23</div>
<div class="h" style="left:0;top:667px;width:25px;height:19px;line-height:22px;text-align:center">24</div>
<svg style="position:absolute;left:10px;top:169px" width="12" height="12"><path d="M11 1V11H1Z" fill="#b9bec6"/></svg>
<!-- title bar -->
<div style="left:0;top:0;width:1366px;height:48px;background:linear-gradient(to bottom,#efc65f 0,#f2cf7c 10px,#f9e3ae 24px,#fdf3da 38px,#fffbf3 48px)"></div>
<div style="left:1310px;top:19px;width:56px;height:29px;background:linear-gradient(to left,rgba(240,198,92,.95),rgba(240,198,92,.5) 30%,rgba(240,198,92,0))"></div>
<div style="left:0;top:0;width:480px;height:48px;background:radial-gradient(ellipse 420px 24px at 30px 21px,rgba(255,250,236,.95),rgba(255,250,236,.6) 45%,rgba(255,250,236,0))"></div>
<div style="left:540px;top:0;width:290px;height:26px;background:radial-gradient(ellipse at 50% 50%,rgba(255,248,225,.75),rgba(255,248,225,0) 70%)"></div>
<!-- QAT icons -->
<svg style="left:1px;top:3px" width="16" height="16" viewBox="0 0 16 16"><rect x=".5" y=".5" width="15" height="15" rx="1.5" fill="#e9f3e4" stroke="#3c8a3c"/><path d="M3 3h3l2 3.2L10 3h3L9.6 8 13 13h-3L8 9.8 6 13H3l3.4-5z" fill="#1f7a2a"/></svg>
<div style="left:21px;top:4px;width:1px;height:14px;background:#b9a679"></div>
<svg style="left:29px;top:4px" width="14" height="14" viewBox="0 0 14 14"><path d="M.5.5h13v13H.5z" fill="#3d4fb0" stroke="#26338a"/><rect x="3" y="1" width="8" height="5" fill="#eef1fb"/><rect x="3" y="8.5" width="8" height="5" fill="#c9cfe6"/><rect x="8" y="9.5" width="2" height="3" fill="#26338a"/></svg>
<svg style="left:52px;top:4px" width="14" height="14" viewBox="0 0 14 14"><path d="M1 1l.8 6.5L8 6 5.6 4.6C8.5 3 11 5 10.6 8 10.3 10.3 8.6 11.8 6.5 12.5 10.8 12.7 13.4 10 13 6.6 12.5 2.600 8 .8 3.800 3.200z" fill="#3f6fd6" stroke="#2a4fa8" stroke-width=".6"/></svg>
<svg style="left:69px;top:8px" width="8" height="5"><path d="M.5.500h6L3.500 4z" fill="#222"/></svg>
<svg style="left:83px;top:4px" width="14" height="14" viewBox="0 0 14 14"><path d="M13 1l-.8 6.500L6 6l2.400-1.400C5.500 3 3 5 3.400 8c.3 2.300 2 3.800 4.100 4.500C3.200 12.700.6 10 1 6.600 1.500 2.600 6 .8 10.200 3.200z" fill="#b9bfcc" stroke="#a3aab9" stroke-width=".6"/></svg>
<svg style="left:100px;top:8px" width="8" height="5"><path d="M.5.500h6L3.500 4z" fill="#a9a9a9"/></svg>
<div style="left:114px;top:4px;width:1px;height:14px;background:#6b6450"></div>
<svg style="left:118px;top:7px" width="8" height="9"><rect x=".5" y="0" width="6" height="1.500" fill="#222"/><path d="M.5 3h6L3.500 6.500z" fill="#222"/></svg>
<!-- window controls -->
<div style="left:1318px;top:0;width:45px;height:19px;background:linear-gradient(to bottom,#c74848,#cf5c5c 60%,#dc8a8a)"></div>
<svg style="left:1336px;top:4px" width="10" height="10"><path d="M1 1l8 8M9 1l-8 8" stroke="#fff" stroke-width="2"/></svg>
<div style="left:1274px;top:11px;width:8px;height:2px;background:#2b2b2b"></div>
<svg style="left:1298px;top:4px" width="12" height="11"><path d="M3.500 3V.5h7.500v7H8.500" fill="none" stroke="#2b2b2b"/><rect x="1" y="3.500" width="7" height="6.500" fill="none" stroke="#2b2b2b" stroke-width="1.400"/></svg>
<!-- ribbon row-2 controls -->
<svg style="left:1262px;top:32px" width="11" height="9"><path d="M1 7.500L5.500 2.500 10 7.500" fill="none" stroke="#333" stroke-width="2.600"/><path d="M2.200 7.200L5.500 3.800 8.800 7.200" fill="none" stroke="#fff" stroke-width=".9"/></svg>
<svg style="left:1281px;top:28px" width="17" height="17"><defs><radialGradient id="hg" cx="40%" cy="30%" r="70%"><stop offset="0" stop-color="#8fb6ee"/><stop offset="1" stop-color="#2a61c0"/></radialGradient></defs><circle cx="8.500" cy="8.500" r="8" fill="url(#hg)" stroke="#3f6cb8" stroke-width=".8"/><text x="8.500" y="13" font-size="12.500" font-weight="bold" fill="#fff" text-anchor="middle" font-family="Liberation Sans,sans-serif">?</text></svg>
<div style="left:1306px;top:34px;width:12px;height:6px;border:1.500px solid #3a3a3a;border-radius:1.500px;background:#fff"></div>
<svg style="left:1327px;top:30px" width="13" height="13"><rect x="4" y="1" width="8" height="6.500" fill="#fff" stroke="#3a3a3a" stroke-width="1.400"/><rect x="1" y="5" width="8" height="6.500" fill="#fff" stroke="#3a3a3a" stroke-width="1.400"/><rect x="3.500" y="7.500" width="3" height="2" fill="none" stroke="#3a3a3a" stroke-width=".9"/></svg>
<svg style="left:1350px;top:31px" width="12" height="10"><path d="M1.500 1.500l9 7M10.500 1.500l-9 7" stroke="#3a3a3a" stroke-width="3.400"/><path d="M1.500 1.500l9 7M10.500 1.500l-9 7" stroke="#fff" stroke-width="1"/></svg>
<!-- tabs -->
<div style="left:0;top:25px;width:56px;height:23px;border-radius:4px 4px 0 0;border:1px solid #1f6a2a;border-bottom:none;background:radial-gradient(ellipse 34px 9px at 50% 108%,rgba(115,220,80,.95),rgba(115,220,80,0)),linear-gradient(to bottom,#47a247 0,#358f39 35%,#2b8231 65%,#37953a 100%)"></div>
<!-- ribbon body -->
<div style="left:0;top:48px;width:1366px;height:87px;background:linear-gradient(to bottom,#fff 0,#fff 45%,#f4f5f7 70%,#e6e9ed 100%);border-top:1px solid #b9bdc4;border-bottom:1px solid #8f949c"></div>
<div style="left:515px;top:25px;width:62px;height:24px;border:1px solid #b9bdc4;border-bottom:none;border-radius:3px 3px 0 0;background:#fff"></div>
<!-- group separators -->
<div style="left:162px;top:50px;width:1px;height:83px;background:linear-gradient(#e8ebef,#bcc2cc)"></div>
<div style="left:222px;top:50px;width:1px;height:83px;background:linear-gradient(#e8ebef,#bcc2cc)"></div>
<div style="left:552px;top:50px;width:1px;height:83px;background:linear-gradient(#e8ebef,#bcc2cc)"></div>
<div style="left:898px;top:50px;width:1px;height:83px;background:linear-gradient(#e8ebef,#bcc2cc)"></div>
<!-- group labels -->
<!-- big button labels -->
<!-- small button labels -->
<div style="left:414px;top:95px;width:74px;height:22px;border:1px solid #d9a93e;border-radius:3px;background:linear-gradient(#fde9a0,#fcd765 50%,#fbd04f 55%,#fde08a)"></div>
<svg style="left:819px;top:104px" width="7" height="4"><path d="M0 0h6L3 3.500z" fill="#555"/></svg>
<svg style="left:0;top:48px" width="900" height="87" viewBox="0 48 900 87">
<defs>
<linearGradient id="chk" x1="0" y1="0" x2="1" y2="1"><stop offset="0" stop-color="#6fa0f5"/><stop offset=".5" stop-color="#2f6be0"/><stop offset="1" stop-color="#1f4fc0"/></linearGradient>
<linearGradient id="bbk" x1="0" y1="0" x2="1" y2="0"><stop offset="0" stop-color="#7f88e2"/><stop offset=".45" stop-color="#d5d9ff"/><stop offset="1" stop-color="#8b93e6"/></linearGradient>
<linearGradient id="gbk" x1="0" y1="0" x2="1" y2="0"><stop offset="0" stop-color="#e3b92c"/><stop offset=".45" stop-color="#fbeea0"/><stop offset="1" stop-color="#d8ab22"/></linearGradient>
<radialGradient id="lens" cx="40%" cy="35%" r="70%"><stop offset="0" stop-color="#fdfefe"/><stop offset="1" stop-color="#bfdcee"/></radialGradient>
<linearGradient id="note" x1="0" y1="0" x2="1" y2="1"><stop offset="0" stop-color="#f9eb9c"/><stop offset="1" stop-color="#e6c859"/></linearGradient>
<linearGradient id="gnote" x1="0" y1="0" x2="1" y2="1"><stop offset="0" stop-color="#ebe9ec"/><stop offset="1" stop-color="#d6d4d7"/></linearGradient>
<linearGradient id="garr" x1="0" y1="0" x2="0" y2="1"><stop offset="0" stop-color="#c6c6c8"/><stop offset="1" stop-color="#a4a4a7"/></linearGradient>
<linearGradient id="lock" x1="0" y1="0" x2="0" y2="1"><stop offset="0" stop-color="#fde9a2"/><stop offset=".5" stop-color="#f3c64a"/><stop offset=".55" stop-color="#e9b430"/><stop offset="1" stop-color="#f6d46c"/></linearGradient>
<linearGradient id="cover" x1="0" y1="0" x2="0" y2="1"><stop offset="0" stop-color="#6a8ad6"/><stop offset="1" stop-color="#3c5fb8"/></linearGradient>
<radialGradient id="spk" cx="50%" cy="50%" r="50%"><stop offset="0" stop-color="#fff"/><stop offset=".35" stop-color="#ffe45a"/><stop offset="1" stop-color="#f0a010" stop-opacity="0"/></radialGradient>
<linearGradient id="hand" x1="0" y1="0" x2="0" y2="1"><stop offset="0" stop-color="#f4d56a"/><stop offset="1" stop-color="#b98a1e"/></linearGradient>
</defs>
<!-- Spelling -->
<text x="12" y="66" font-family="Liberation Serif,serif" font-weight="bold" font-size="14.6" textLength="28.500" lengthAdjust="spacingAndGlyphs" fill="#1a1a1a">ABC</text>
<path d="M15.600 75L19.300 71.800 24 77.500 42 60.500 38.500 67.500 24.600 84.500z" fill="url(#chk)" stroke="#2457c8" stroke-width=".7" stroke-linejoin="round"/>
<!-- Research -->
<path d="M62.500 60.500L68.500 54h8L70 60.500z" fill="#fff" stroke="#7a84dd" stroke-width=".8"/>
<path d="M64.500 60l5.500-5.600M66.500 60l5.500-5.600M68.500 60l5.500-5.600" stroke="#999" stroke-width=".45"/>
<rect x="62" y="60" width="8.300" height="20.500" rx="1.500" fill="url(#bbk)" stroke="#7680d8" stroke-width=".7"/>
<path d="M62.300 63.500h7.700M62.300 77.500h7.700" stroke="#7680d8" stroke-width=".7"/>
<path d="M78.500 61.500L86 55v21l-7.500 6z" fill="#c89f1c" stroke="#a8820f" stroke-width=".6"/>
<path d="M70.500 61.500L77 55h8.500l-7 6.500z" fill="#fff" stroke="#c9a227" stroke-width=".8"/>
<path d="M72.500 61l6-5.700M74.500 61l6-5.700M76.500 61l6-5.700" stroke="#999" stroke-width=".45"/>
<rect x="70.300" y="61" width="8.300" height="21" rx="1.500" fill="url(#gbk)" stroke="#b8901a" stroke-width=".7"/>
<path d="M70.500 64.500h8M70.500 79h8" stroke="#c9a227" stroke-width=".7"/>
<path d="M82.600 74.800L88 82.300" stroke="#5a5a5a" stroke-width="2.400" stroke-linecap="round"/>
<path d="M82.600 74.800L88 82.300" stroke="#c8c8c8" stroke-width=".8" stroke-linecap="round"/>
<circle cx="78.800" cy="70.400" r="5.400" fill="url(#lens)" stroke="#8b8f96" stroke-width="1.300"/>
<!-- Thesaurus -->
<rect x="115" y="58" width="29" height="23.600" fill="url(#cover)" stroke="#3a59ad" stroke-width=".6"/>
<path d="M117.500 58.500C121 55.800 126 55.800 129.400 58V79.800C126 77.800 121 77.800 117.500 79.800z" fill="#fafbfd" stroke="#8f9bb3" stroke-width=".7"/>
<path d="M141.500 58.500C138 55.800 133 55.800 129.400 58V79.800C133 77.800 138 77.800 141.500 79.800z" fill="#fafbfd" stroke="#8f9bb3" stroke-width=".7"/>
<path d="M117.500 80.200C121 78.400 126 78.400 129.400 80.400 133 78.400 138 78.400 141.500 80.200" fill="none" stroke="#56627a" stroke-width="1"/>
<g stroke="#a9b3c4" stroke-width=".8"><path d="M119.500 59.500h8M119.500 69.500h8M119.500 71.500h8M119.500 73.500h8M119.500 75.500h8M131.500 59.500h8M131.500 61.500h8M131.500 63.500h8M131.500 65.500h8M131.500 67.500h8M131.500 69.500h8M131.500 71.500h8M131.500 73.500h8M131.500 75.500h8"/></g>
<path d="M119 61.500h5" stroke="#c8161d" stroke-width="1"/>
<path d="M121 63.500h5M120 65.500h5M121 67.500h3.500" stroke="#3e5fc4" stroke-width="1"/>
<!-- Translate -->
<path d="M180.500 56.500h13l6 6v19h-19z" fill="#fbfcfe" stroke="#8d9bb5" stroke-width=".8"/>
<path d="M193.500 56.500v6h6z" fill="#dfe6f2" stroke="#8d9bb5" stroke-width=".8"/>
<path d="M183 60.300h9M183 62.400h9M183 64.500h14" stroke="#d6511d" stroke-width="1.100"/>
<g stroke="#b8c4d8" stroke-width=".8"><path d="M183 66.500h10M183 68.500h8M183 70.500h6M183 72.500h6M183 74.500h6M183 76.500h7M183 78.500h9"/></g>
<path d="M193.500 67.500c2.500-1.800 5-1.500 6.500.8" fill="none" stroke="#3f6fd0" stroke-width="1.300"/>
<path d="M197.500 68l4-.3-2.200 3z" fill="#3f6fd0"/>
<text x="189.300" y="77.700" font-family="Liberation Sans,sans-serif" font-weight="bold" font-size="15" fill="#5d5d5d" stroke="#fff" stroke-width="1.600" paint-order="stroke">a</text>
<text x="195.300" y="83.600" font-family="Noto Sans CJK JP,IPAGothic,sans-serif" font-weight="bold" font-size="13.500" fill="#555" stroke="#fff" stroke-width="1.600" paint-order="stroke">あ</text>
<!-- New comment -->
<rect x="243.600" y="60.700" width="27.200" height="21.200" fill="#3b2d12"/>
<rect x="243.300" y="60.300" width="26" height="20" fill="url(#note)" stroke="#a8893a" stroke-width=".5"/>
<path d="M263 74h6.600v6.600H263z" fill="#c9a63a" stroke="#4a3a16" stroke-width=".7"/>
<path d="M263.300 80.300L269.300 74.300" stroke="#3b2d12" stroke-width=".9"/>
<g stroke="#f2a412" stroke-width="1.200" stroke-linecap="round"><path d="M245 57v11.200M239.400 62.600h11.200M241 58.600l8 8M249 58.600l-8 8"/></g>
<circle cx="245" cy="62.600" r="4" fill="url(#spk)"/>
<circle cx="245" cy="62.600" r="1.500" fill="#fff"/>
<!-- Delete -->
<rect x="291.800" y="60.800" width="27.200" height="21.100" fill="#a9a9ab"/>
<rect x="291.500" y="60.300" width="26" height="20" fill="url(#gnote)" stroke="#b4b4b6" stroke-width=".5"/>
<path d="M311.300 74h6.500v6.500h-6.500z" fill="#c4c4c6" stroke="#a2a2a4" stroke-width=".6"/><path d="M311.500 80.300l6-6" stroke="#f2f2f2" stroke-width=".8"/>
<path d="M289 56.500L302.500 69.500" stroke="#a3a3a5" stroke-width="2.200" stroke-linecap="round"/>
<path d="M301.500 58.500L289.500 70" stroke="#a3a3a5" stroke-width="2.200" stroke-linecap="round"/>
<!-- Previous -->
<rect x="336.800" y="60.800" width="27.200" height="21.100" fill="#a9a9ab"/>
<rect x="336.500" y="60.300" width="26" height="20" fill="url(#gnote)" stroke="#b4b4b6" stroke-width=".5"/>
<path d="M356.300 74h6.500v6.500h-6.500z" fill="#c4c4c6" stroke="#a2a2a4" stroke-width=".6"/><path d="M356.500 80.300l6-6" stroke="#f2f2f2" stroke-width=".8"/>
<path d="M332.200 61.300L338.800 55v3h7v6.600h-7v3z" fill="url(#garr)" stroke="#a0a0a3" stroke-width=".5"/>
<!-- Next -->
<rect x="381.800" y="60.800" width="27.200" height="21.100" fill="#a9a9ab"/>
<rect x="381.500" y="60.300" width="26" height="20" fill="url(#gnote)" stroke="#b4b4b6" stroke-width=".5"/>
<path d="M401.300 74h6.500v6.500h-6.500z" fill="#c4c4c6" stroke="#a2a2a4" stroke-width=".6"/><path d="M401.500 80.300l6-6" stroke="#f2f2f2" stroke-width=".8"/>
<path d="M391.600 61.300L385 55v3h-6.800v6.600H385v3z" fill="url(#garr)" stroke="#a0a0a3" stroke-width=".5"/>
<!-- show/hide small -->
<path d="M417.500 66V56.500H431" fill="none" stroke="#8a8a8c" stroke-width="1" stroke-dasharray="1 1.500"/>
<path d="M431.500 56.800v10.700h-14z" fill="#cfcfd1" stroke="#a6a6a8" stroke-width=".7"/>
<path d="M417.500 67.500h14.500" stroke="#9a9a9c" stroke-width="1"/>
<circle cx="428.600" cy="64.600" r="1.200" fill="#f4f4f4" stroke="#a6a6a8" stroke-width=".5"/>
<!-- show all -->
<g stroke="#7d6f2a" stroke-width=".8"><rect x="417.300" y="78.500" width="9.500" height="6.500" rx="1" fill="#e9d982"/><rect x="420.300" y="80.800" width="9.500" height="6.500" rx="1" fill="#efe08c"/><rect x="423.300" y="83" width="9.500" height="6.300" rx="1" fill="#f3e796"/></g>
<path d="M430.300 87.800h2v1.200h-2z" fill="#6d5f20"/>
<!-- changes: protect sheet -->
<path d="M563.500 58.500h28v20h-18.500v2.500q0 1-1 1h-6q-1 0-1-1v-2.500h-1.500z" fill="#f6f8fc" stroke="#8395bb" stroke-width=".9"/>
<path d="M570.500 58.500v20M577.500 58.500v20M584.500 58.500v20M563.500 63.500h28M563.500 68.500h28M563.500 73.500h28" stroke="#8fa0c3" stroke-width=".9"/>
<path d="M584.500 63v-2.500a3.200 3.200 0 0 1 6.400 0V63" fill="none" stroke="#9a7a2c" stroke-width="2.600"/>
<path d="M584.500 63v-2.500a3.200 3.200 0 0 1 6.400 0V63" fill="none" stroke="#f7dc8a" stroke-width="1.300"/>
<rect x="581.800" y="62.600" width="11.800" height="9.600" rx="1" fill="url(#lock)" stroke="#8a6d2a" stroke-width=".8"/>
<path d="M587.700 64.800l1.800 2.200h-1.100v2.400h-1.400V67h-1.100z" fill="#4a4520"/>
<!-- protect workbook -->
<path d="M614.500 58.500h14.500v14h-14.500z" fill="#f3f6fb" stroke="#8fa0c3" stroke-width=".8"/>
<path d="M614.500 61h14.500M614.500 63.500h14.500M614.500 66h14.500M614.500 68.500h14.500M619 58.500v14M624 58.500v14" stroke="#a9b6d2" stroke-width=".7"/>
<path d="M619.500 61.500h12v14h-12z" fill="#f3f6fb" stroke="#8fa0c3" stroke-width=".8"/>
<path d="M619.500 64h12M619.500 66.500h12M619.500 69h12M619.500 71.500h12M624 61.500v14M628 61.500v14" stroke="#a9b6d2" stroke-width=".7"/>
<path d="M623.500 67.500h20v12h-15v1.500q0 .8-.8.800h-3.400q-.8 0-.8-.8z" fill="#f6f8fc" stroke="#7d90b8" stroke-width=".9"/>
<path d="M623.500 70.500h20M623.500 73.500h20M623.500 76.500h20M628.500 67.500v12M633.500 67.500v12M638.500 67.500v12" stroke="#8fa0c3" stroke-width=".8"/>
<path d="M632.300 62.500V60a3.200 3.200 0 0 1 6.400 0v2.500" fill="none" stroke="#9a7a2c" stroke-width="2.600"/>
<path d="M632.300 62.500V60a3.200 3.200 0 0 1 6.400 0v2.500" fill="none" stroke="#f7dc8a" stroke-width="1.300"/>
<rect x="629.600" y="62" width="12" height="9.200" rx="1" fill="url(#lock)" stroke="#8a6d2a" stroke-width=".8"/>
<path d="M635.600 64l1.800 2.200h-1.100v2.400h-1.400v-2.400h-1.100z" fill="#4a4520"/>
<!-- share workbook -->
<path d="M675.500 55.500h28.500v20h-2.500v2q0 1-1 1h-6.500q-1 0-1-1v-2h-17.500z" fill="#f6f8fc" stroke="#8395bb" stroke-width=".9"/>
<path d="M682.500 55.500v20M689.500 55.500v20M697 55.500v20M675.500 60.500h28.500M675.500 65.500h28.500M675.500 70.500h28.500" stroke="#a3b2cf" stroke-width=".8"/>
<path d="M678 76.500c3-1.800 7-2 10-.8 2.500-.4 5 .2 6.800 1.200.8.600.2 1.600-1 1.400l-3.500-.4c2 .8 2.800 1.400 1.800 2.200-2.500 1.800-6.500 3.200-9.500 3.200-2 0-3.300-.5-4.600-1.300z" fill="url(#hand)" stroke="#9a7418" stroke-width=".6"/>
<rect x="674.300" y="74.200" width="3.600" height="9.600" fill="#27a93a" stroke="#157a25" stroke-width=".7"/>
<!-- protect & share small -->
<path d="M726.500 54.500h9v9h-9z" fill="#eef2fa" stroke="#5f77ad" stroke-width=".8"/>
<path d="M729.500 56.500h9.500v10h-9.500z" fill="#eef2fa" stroke="#4f67a0" stroke-width=".9"/>
<path d="M729.500 59h9.500M729.500 61.500h9.500M729.500 64h9.500M732.500 56.500v10M735.700 56.500v10" stroke="#6d84b8" stroke-width=".7"/>
<circle cx="727.800" cy="61" r="2.900" fill="#7a7a7a" stroke="#4c4c4c" stroke-width=".6"/>
<path d="M723.600 70c0-3.500 1.800-5.300 4.200-5.300s4.200 1.800 4.200 5.300z" fill="#3faa45" stroke="#1f7a2a" stroke-width=".6"/>
<!-- allow users small -->
<path d="M729.500 76.500h9.500v10h-9.500z" fill="#eef2fa" stroke="#4f67a0" stroke-width=".9"/>
<path d="M729.500 79h9.500M729.500 81.500h9.500M729.500 84h9.500M732.500 76.500v10M735.700 76.500v10" stroke="#6d84b8" stroke-width=".7"/>
<circle cx="731.500" cy="81.500" r="2.700" fill="#8a8a8a" stroke="#4c4c4c" stroke-width=".6"/>
<path d="M728 89.500c0-3 1.500-4.800 3.700-4.800s3.700 1.800 3.700 4.800z" fill="#3faa45" stroke="#1f7a2a" stroke-width=".6"/>
<circle cx="727" cy="83.500" r="2.900" fill="#777" stroke="#444" stroke-width=".6"/>
<path d="M722.800 92c0-3.400 1.800-5.200 4.200-5.200s4.200 1.800 4.200 5.200z" fill="#3b62d8" stroke="#2443a8" stroke-width=".6"/>
<!-- track changes small -->
<path d="M727.500 99.500h7l3.500 3.500v10.500h-10.500z" fill="#fff" stroke="#6b7890" stroke-width=".8"/>
<path d="M729.500 103.500h6M729.500 105.500h6M729.500 107.500h5M729.500 109.500h4" stroke="#e2733a" stroke-width=".8"/>
<path d="M738.300 105.200l1.800 1.600-6.800 7.200-2.400.8.600-2.400z" fill="#f1cf4e" stroke="#7a6420" stroke-width=".6"/>
<path d="M738.300 105.200l1.800 1.600-1 1-1.800-1.600z" fill="#d9756a"/>
<g stroke="#f0a818" stroke-width="1" stroke-linecap="round"><path d="M726.500 98.500v7M723 102h7M724 99.500l5 5M729 99.500l-5 5"/></g>
<circle cx="726.500" cy="102" r="1.200" fill="#fff6c0"/>
<path d="M723 113.500h5" stroke="#444" stroke-width="1"/>
<!-- show ink icon -->
<path d="M417.500 112.500V99.500H432" fill="none" stroke="#6a6a6c" stroke-width="1" stroke-dasharray="1 1.500"/>
<path d="M419.500 110.500c2 1.800 7 1.600 10-.6 3-2.200 3-5 .8-6.600z" fill="#fff"/>
<path d="M419.500 110.500c2 1.800 7 1.600 10-.6 3-2.200 3-5 .8-6.600" fill="none" stroke="#c23a2a" stroke-width="1.400"/>
<path d="M419 107c1-2.500 4-4.500 8.500-4.300" fill="none" stroke="#e7b9a0" stroke-width=".9"/>
<path d="M419.500 111L432 99.500" stroke="#9c9c9e" stroke-width=".9"/>
</svg>

<div class="tb w" style="left:18.0px;top:29.5px;letter-spacing:0.12px">File</div>
<div class="tb" style="left:72.5px;top:29.5px;letter-spacing:0.08px">Home</div>
<div class="tb" style="left:131.0px;top:29.5px;letter-spacing:-0.01px">Bin Laal Collection</div>
<div class="tb" style="left:253.5px;top:29.5px;letter-spacing:0.17px">Insert</div>
<div class="tb" style="left:310.8px;top:29.5px;letter-spacing:-0.19px">Page Layout</div>
<div class="tb" style="left:401.1px;top:29.5px;letter-spacing:-0.15px">Formulas</div>
<div class="tb" style="left:475.5px;top:29.5px;letter-spacing:0.00px">Data</div>
<div class="tb" style="left:528.0px;top:29.5px;letter-spacing:-0.29px">Review</div>
<div class="tb" style="left:591.8px;top:29.5px;letter-spacing:0.12px">View</div>
<div class="tb" style="left:644.3px;top:29.5px;letter-spacing:0.04px">QuickBooks</div>
<div class="gl" style="left:59.0px;top:118.9px;letter-spacing:0.27px">Proofing</div>
<div class="gl" style="left:168.0px;top:118.9px;letter-spacing:-0.02px">Language</div>
<div class="gl" style="left:361.5px;top:118.9px;letter-spacing:-0.26px">Comments</div>
<div class="gl" style="left:704.3px;top:118.9px;letter-spacing:-0.22px">Changes</div>
<div class="rl" style="left:5.5px;top:89.0px;letter-spacing:0.26px">Spelling</div>
<div class="rl" style="left:53.0px;top:89.0px;letter-spacing:-0.40px">Research</div>
<div class="rl" style="left:103.5px;top:89.0px;letter-spacing:-0.20px">Thesaurus</div>
<div class="rl" style="left:169.5px;top:89.0px;letter-spacing:-0.11px">Translate</div>
<div class="rl" style="left:243.0px;top:89.0px;letter-spacing:0.16px">New</div>
<div class="rl" style="left:230.0px;top:101.8px;letter-spacing:-0.12px">Comment</div>
<div class="rl dis" style="left:286.0px;top:89.0px;letter-spacing:-0.04px">Delete</div>
<div class="rl dis" style="left:325.5px;top:89.0px;letter-spacing:-0.09px">Previous</div>
<div class="rl dis" style="left:381.0px;top:89.0px;letter-spacing:-0.16px">Next</div>
<div class="rl" style="left:559.9px;top:89.0px;letter-spacing:-0.02px">Protect</div>
<div class="rl" style="left:563.8px;top:101.8px;letter-spacing:-0.21px">Sheet</div>
<div class="rl" style="left:610.8px;top:89.0px;letter-spacing:-0.02px">Protect</div>
<div class="rl" style="left:602.1px;top:101.8px;letter-spacing:0.43px">Workbook</div>
<div class="rl" style="left:674.8px;top:89.0px;letter-spacing:-0.30px">Share</div>
<div class="rl" style="left:661.6px;top:101.8px;letter-spacing:0.50px">Workbook</div>
<div class="rl dis" style="left:436.0px;top:54.5px;letter-spacing:0.02px">Show/Hide Comment</div>
<div class="rl" style="left:436.0px;top:76.7px;letter-spacing:-0.05px">Show All Comments</div>
<div class="rl" style="left:436.0px;top:98.7px;letter-spacing:0.11px">Show Ink</div>
<div class="rl" style="left:742.0px;top:54.5px;letter-spacing:0.06px">Protect and Share Workbook</div>
<div class="rl" style="left:742.0px;top:76.7px;letter-spacing:-0.06px">Allow Users to Edit Ranges</div>
<div class="rl" style="left:742.0px;top:98.7px;letter-spacing:-0.27px">Track Changes</div>
<div class="ttl" style="left:602.2px;top:1.8px;letter-spacing:-0.29px">Book6&nbsp; -&nbsp; Microsoft Excel</div>
<!-- formula bar -->
<div style="left:0;top:135px;width:1366px;height:28px;background:#e7ebf1"></div>
<div style="left:0;top:135px;width:1366px;height:3px;background:linear-gradient(#c6cad1,#d4d7dd)"></div>
<div style="left:0;top:160px;width:1366px;height:1px;background:#f9fafc"></div>
<div style="left:0;top:161px;width:1366px;height:2px;background:#e1e5f1"></div>
<div style="left:0;top:138px;width:180px;height:22px;background:#fff;border-top:1px solid #a3a8b1;border-bottom:1px solid #8f949c"></div>
<div style="left:0;top:142px;width:142px;height:16px;line-height:16px;text-align:center;font-size:13px;color:#000">Q48</div>
<svg style="left:147px;top:147.500px" width="8" height="5"><path d="M0 0h7L3.500 4z" fill="#333"/></svg>
<div style="left:160px;top:138px;width:85px;height:22px;background:#e1e4ea;border:1px solid #a9aeb7;border-radius:11px 0 0 11px"></div>
<div style="left:166px;top:145px;width:8px;height:8px;border-radius:4px;background:linear-gradient(#b9bdc5,#eceef2)"></div>
<div style="left:226px;top:139px;width:14px;height:20px;line-height:19px;font-family:'Liberation Serif',serif;font-style:italic;font-weight:bold;font-size:14.500px;color:#333;letter-spacing:-.5px">f<span style="font-size:11px">x</span></div>
<div style="left:245px;top:138px;width:1105px;height:22px;background:#fff;border-top:1px solid #a3a8b1;border-bottom:1px solid #8f949c"></div>
<div style="left:1350px;top:138px;width:15px;height:22px;background:#e9ecf1;border:1px solid #a9aeb7"></div>
<svg style="left:1353px;top:145px" width="10" height="7"><path d="M1.500 1l3.500 3.500L8.500 1" fill="none" stroke="#444" stroke-width="1.800"/></svg>
<!-- scrollbars -->
<div style="left:1347px;top:164px;width:19px;height:526px;background:#e3e6ec"></div>
<div style="left:1346px;top:164px;width:1px;height:526px;background:#9ea5b0"></div>
<div style="left:1362px;top:164px;width:1px;height:543px;background:#b5bac3"></div>
<div style="left:1347px;top:164px;width:15px;height:8px;background:#fff;border:1.500px solid #8e949e"></div>
<div style="left:1351px;top:167px;width:7px;height:1px;background:#8e949e"></div>
<svg style="left:1349px;top:177px" width="11" height="7"><path d="M0 6.500L5.500 .500 11 6.500z" fill="#4a4a4a"/></svg>
<div style="left:1347px;top:189px;width:14px;height:463px;border:1px solid #8e949e;border-radius:2px;background:linear-gradient(to right,#f4f5f8,#e4e7ec 50%,#d5d9e0)"></div>
<div style="left:1351px;top:415px;width:7px;height:1px;background:#8e949e;box-shadow:0 2px #8e949e,0 4px #8e949e,0 6px #8e949e"></div>
<svg style="left:1349px;top:678px" width="11" height="7"><path d="M0 .500L5.500 6.500 11 .500z" fill="#4a4a4a"/></svg>
<!-- sheet tab bar -->
<div style="left:0;top:690px;width:1346px;height:17px;background:#dde1e9"></div>
<div style="left:0;top:689px;width:1362px;height:1px;background:#a0a6b1"></div>
<div style="left:1347px;top:690px;width:15px;height:17px;background:#e3e6ec"></div>
<svg style="left:5px;top:693px" width="56" height="10"><g fill="#3d4450"><rect x="0" y="1" width="1.500" height="8"/><path d="M7 1v8L2.500 5z"/><path d="M20 1v8l-4.500-4z"/><path d="M31 1v8l4.500-4z"/><path d="M44 1v8l4.500-4z"/><rect x="49.500" y="1" width="1.500" height="8"/></g></svg>
<svg style="left:0;top:690px" width="300" height="17"><path d="M129.500 0L121.500 15.500H181.500L189.500 0zM189.500 0L181.500 15.500H239.500L247.500 0zM247.500 0L239.500 15.500H277.500L285.500 0z" fill="#e5e8ee" stroke="#8e949e"/><path d="M62.500 -1V12.500Q62.500 15.500 65.500 15.500H121.500L130 -1z" fill="#fff"/><path d="M62.500 -1V12.500Q62.500 15.500 65.500 15.500H121.500L129.500 0" fill="none" stroke="#8e949e"/></svg>
<div style="left:63px;top:691px;width:60px;height:16px;line-height:16px;text-align:center;font-size:13px;font-weight:bold;color:#333">Sheet1</div>
<div style="left:124px;top:691px;width:60px;height:16px;line-height:16px;text-align:center;font-size:13px;color:#4d5564">Sheet2</div>
<div style="left:184px;top:691px;width:60px;height:16px;line-height:16px;text-align:center;font-size:13px;color:#4d5564">Sheet3</div>
<svg style="left:254px;top:692px" width="15" height="12"><rect x="4" y="3" width="10" height="7" rx="1" fill="#eef2fa" stroke="#5c6f9a"/><path d="M3.500 0v7M0 3.500h7M1 1l5 5M6 1L1 6" stroke="#e8a51d" stroke-width="1"/></svg>
<!-- horizontal scrollbar -->
<div style="left:808px;top:691px;width:8px;height:15px;background:#fff;border:1.500px solid #8e949e"></div>
<div style="left:811px;top:694px;width:1px;height:8px;background:#8e949e"></div>
<svg style="left:821px;top:693px" width="6" height="11"><path d="M5.500 0v11L.5 5.500z" fill="#4a4a4a"/></svg>
<div style="left:834px;top:691px;width:463px;height:15px;border:1px solid #8e949e;border-radius:2px;background:linear-gradient(#f6f7f9,#e6e9ee 50%,#d9dde4)"></div>
<div style="left:1061px;top:695px;width:1px;height:7px;background:#8e949e;box-shadow:2px 0 #8e949e,4px 0 #8e949e,6px 0 #8e949e"></div>
<svg style="left:1327px;top:693px" width="6" height="11"><path d="M.5 0v11l5-5.500z" fill="#4a4a4a"/></svg>
<div style="left:1338px;top:691px;width:8px;height:15px;background:#fff;border:1.500px solid #8e949e"></div>
<div style="left:1341px;top:694px;width:1px;height:8px;background:#8e949e"></div>
<!-- status bar -->
<div style="left:0;top:707px;width:1366px;height:19px;background:linear-gradient(#e6e9ee 0,#d6dae1 25%,#c4c9d3 60%,#b4bac5 100%);border-top:1px solid #9aa0ab"></div>
<div style="left:48px;top:709px;width:1px;height:17px;background:#8e949e"></div>
<div style="left:49px;top:709px;width:1px;height:17px;background:#eef0f4"></div>
<div style="left:1124px;top:709px;width:1px;height:17px;background:#8e949e"></div>
<div style="left:1125px;top:709px;width:1px;height:17px;background:#eef0f4"></div>
<div style="left:1129px;top:708px;width:19px;height:19px;border:1px solid #e0a83a;border-radius:3px;background:linear-gradient(#fde59a,#fbd35a)"></div>
<svg style="left:1132px;top:711px" width="14" height="12"><rect x=".5" y=".500" width="13" height="11" fill="#fff" stroke="#555"/><path d="M.5 4h13M.5 7.500h13M5 .500v11M9.500 .500v11" stroke="#555"/></svg>
<svg style="left:1150px;top:710px" width="15" height="13"><rect x=".5" y=".500" width="14" height="12" fill="#c9ced6" stroke="#666"/><rect x="3.500" y="3" width="8" height="7.500" fill="#fff" stroke="#666"/><path d="M5 5.500h5M5 7.500h5" stroke="#888"/></svg>
<svg style="left:1169px;top:710px" width="15" height="13"><rect x=".5" y=".500" width="14" height="12" fill="#c9ced6" stroke="#666"/><path d="M3 .500v7h4v-7M7 .500v7h4v-7" fill="#fff" stroke="#666"/></svg>
<div style="left:1238px;top:716px;width:116px;height:1px;background:#7c828d"></div>
<div style="left:1238px;top:717px;width:116px;height:1px;background:#eef0f4"></div>
<svg style="left:1229px;top:708px" width="18" height="18"><circle cx="9" cy="9" r="7.500" fill="#f1f3f6" stroke="#6d737e"/><rect x="5" y="8" width="8" height="2" fill="#333"/></svg>
<svg style="left:1345px;top:708px" width="18" height="18"><circle cx="9" cy="9" r="7.500" fill="#f1f3f6" stroke="#6d737e"/><rect x="5" y="8" width="8" height="2" fill="#333"/><rect x="8" y="5" width="2" height="8" fill="#333"/></svg>
<svg style="left:1291px;top:709px" width="11" height="15"><path d="M1 .500h9v8.500L5.500 14 1 9z" fill="#f1f3f6" stroke="#6d737e"/></svg>
<div class="rl st" style="left:8.0px;top:710.0px;letter-spacing:-0.45px">Ready</div>
<div class="rl st" style="left:1195.0px;top:710.0px;letter-spacing:-0.56px">100%</div>
</body></html>
